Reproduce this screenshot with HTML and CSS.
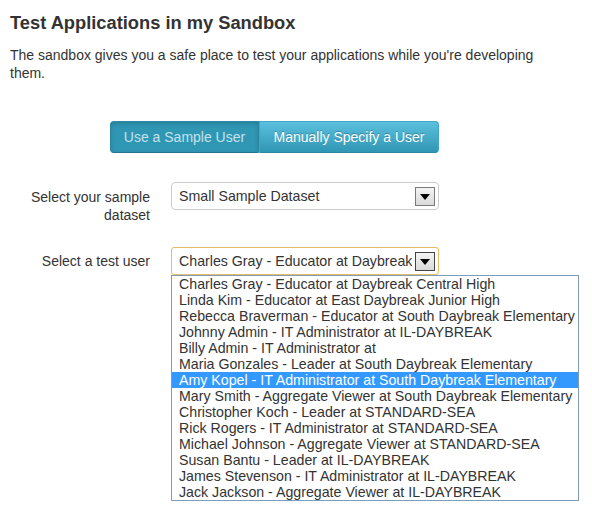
FILE: index.html
```html
<!DOCTYPE html>
<html>
<head>
<meta charset="utf-8">
<link rel="stylesheet" href="styles.css">
</head>
<body>
<div class="page">
  <h1 class="title">Test Applications in my Sandbox</h1>
  <p class="intro">The sandbox gives you a safe place to test your applications while you're developing them.</p>
  <div class="btn-group">
    <div class="btn btn-active">Use a Sample User</div>
    <div class="btn btn-normal">Manually Specify a User</div>
  </div>
  <div class="form">
    <div class="row row-first">
      <div class="label">Select your sample dataset</div>
      <div class="select">
        <span class="select-text">Small Sample Dataset</span>
        <span class="arrow"><span class="tri"></span></span>
      </div>
    </div>
    <div class="row">
      <div class="label label-single">Select a test user</div>
      <div class="picker">
        <div class="select select-focus">
          <span class="select-text">Charles Gray - Educator at Daybreak</span>
          <span class="arrow arrow-dark"><span class="tri"></span></span>
        </div>
        <div class="user-list">
          <div class="opt">Charles Gray - Educator at Daybreak Central High</div>
          <div class="opt">Linda Kim - Educator at East Daybreak Junior High</div>
          <div class="opt">Rebecca Braverman - Educator at South Daybreak Elementary</div>
          <div class="opt">Johnny Admin - IT Administrator at IL-DAYBREAK</div>
          <div class="opt">Billy Admin - IT Administrator at</div>
          <div class="opt">Maria Gonzales - Leader at South Daybreak Elementary</div>
          <div class="opt opt-selected">Amy Kopel - IT Administrator at South Daybreak Elementary</div>
          <div class="opt">Mary Smith - Aggregate Viewer at South Daybreak Elementary</div>
          <div class="opt">Christopher Koch - Leader at STANDARD-SEA</div>
          <div class="opt">Rick Rogers - IT Administrator at STANDARD-SEA</div>
          <div class="opt">Michael Johnson - Aggregate Viewer at STANDARD-SEA</div>
          <div class="opt">Susan Bantu - Leader at IL-DAYBREAK</div>
          <div class="opt">James Stevenson - IT Administrator at IL-DAYBREAK</div>
          <div class="opt">Jack Jackson - Aggregate Viewer at IL-DAYBREAK</div>
        </div>
      </div>
    </div>
  </div>
</div>
</body>
</html>
```
FILE: styles.css
```css
html, body {
  margin: 0;
  padding: 0;
  background: #fff;
}
body {
  font-family: "Liberation Sans", Arial, sans-serif;
  color: #333;
  font-size: 14px;
  min-height: 524px;
}
.page {
  padding: 13px 0 0 10px;
  min-height: 500px;
}
.title {
  margin: 0;
  font-size: 18.3px;
  line-height: 20px;
  font-weight: bold;
  color: #333;
}
.intro {
  margin: 13px 0 0 0;
  width: 540px;
  line-height: 18px;
}
.btn-group {
  display: flex;
  margin: 39px 0 0 100px;
}
.btn {
  box-sizing: border-box;
  height: 32px;
  line-height: 30px;
  text-align: center;
  font-size: 14px;
  border: 1px solid;
}
.btn-active {
  width: 149px;
  background: #2f96b4;
  border-color: #2a86a1 #2a86a1 #24758d #2a86a1;
  color: #c3e2eb;
  border-radius: 4px 0 0 4px;
  box-shadow: inset 0 2px 4px rgba(0, 0, 0, 0.15);
}
.btn-normal {
  width: 180px;
  background: linear-gradient(#5bc0de, #2f96b4);
  border-color: #3fa6c6 #3fa6c6 #2a86a1 #3fa6c6;
  color: #fff;
  text-shadow: 0 -1px 0 rgba(0, 0, 0, 0.25);
  border-radius: 0 4px 4px 0;
}
.form {
  margin-top: 29px;
}
.row {
  display: flex;
  align-items: flex-start;
}
.row-first {
  margin-bottom: 23px;
}
.label {
  width: 140px;
  text-align: right;
  line-height: 18px;
  padding-top: 6px;
  margin-right: 21px;
}
.label-single {
  padding-top: 5px;
}
.picker {
  position: relative;
  width: 268px;
}
.select {
  box-sizing: border-box;
  width: 268px;
  height: 28px;
  border: 1px solid #ccc;
  border-radius: 4px;
  display: flex;
  align-items: center;
  padding: 0 3px 0 7px;
  background: #fff;
}
.select-focus {
  border-color: #e8bb67;
  border-radius: 3px;
}
.select-text {
  flex: 1;
  min-width: 0;
  white-space: nowrap;
  overflow: hidden;
  line-height: 26px;
  color: #333;
  font-size: 14.2px;
}
.arrow {
  box-sizing: border-box;
  width: 20px;
  height: 19px;
  margin-left: 3px;
  border: 1px solid #7a7a7a;
  background: linear-gradient(#f4f4f4, #dadada);
  display: flex;
  align-items: center;
  justify-content: center;
  flex-shrink: 0;
}
.arrow-dark {
  border-color: #444;
}
.tri {
  width: 0;
  height: 0;
  border-left: 5px solid transparent;
  border-right: 5px solid transparent;
  border-top: 6px solid #000;
  margin-top: 1px;
}
.user-list {
  position: absolute;
  top: 28px;
  left: 0;
  width: 406px;
  border: 1px solid #7f9db9;
  background: #fff;
  z-index: 5;
}
.opt {
  height: 16px;
  line-height: 16px;
  padding-left: 7px;
  white-space: nowrap;
  color: #333;
  font-size: 14.2px;
}
.opt-selected {
  background: #3399ff;
  color: #fff;
}
```
